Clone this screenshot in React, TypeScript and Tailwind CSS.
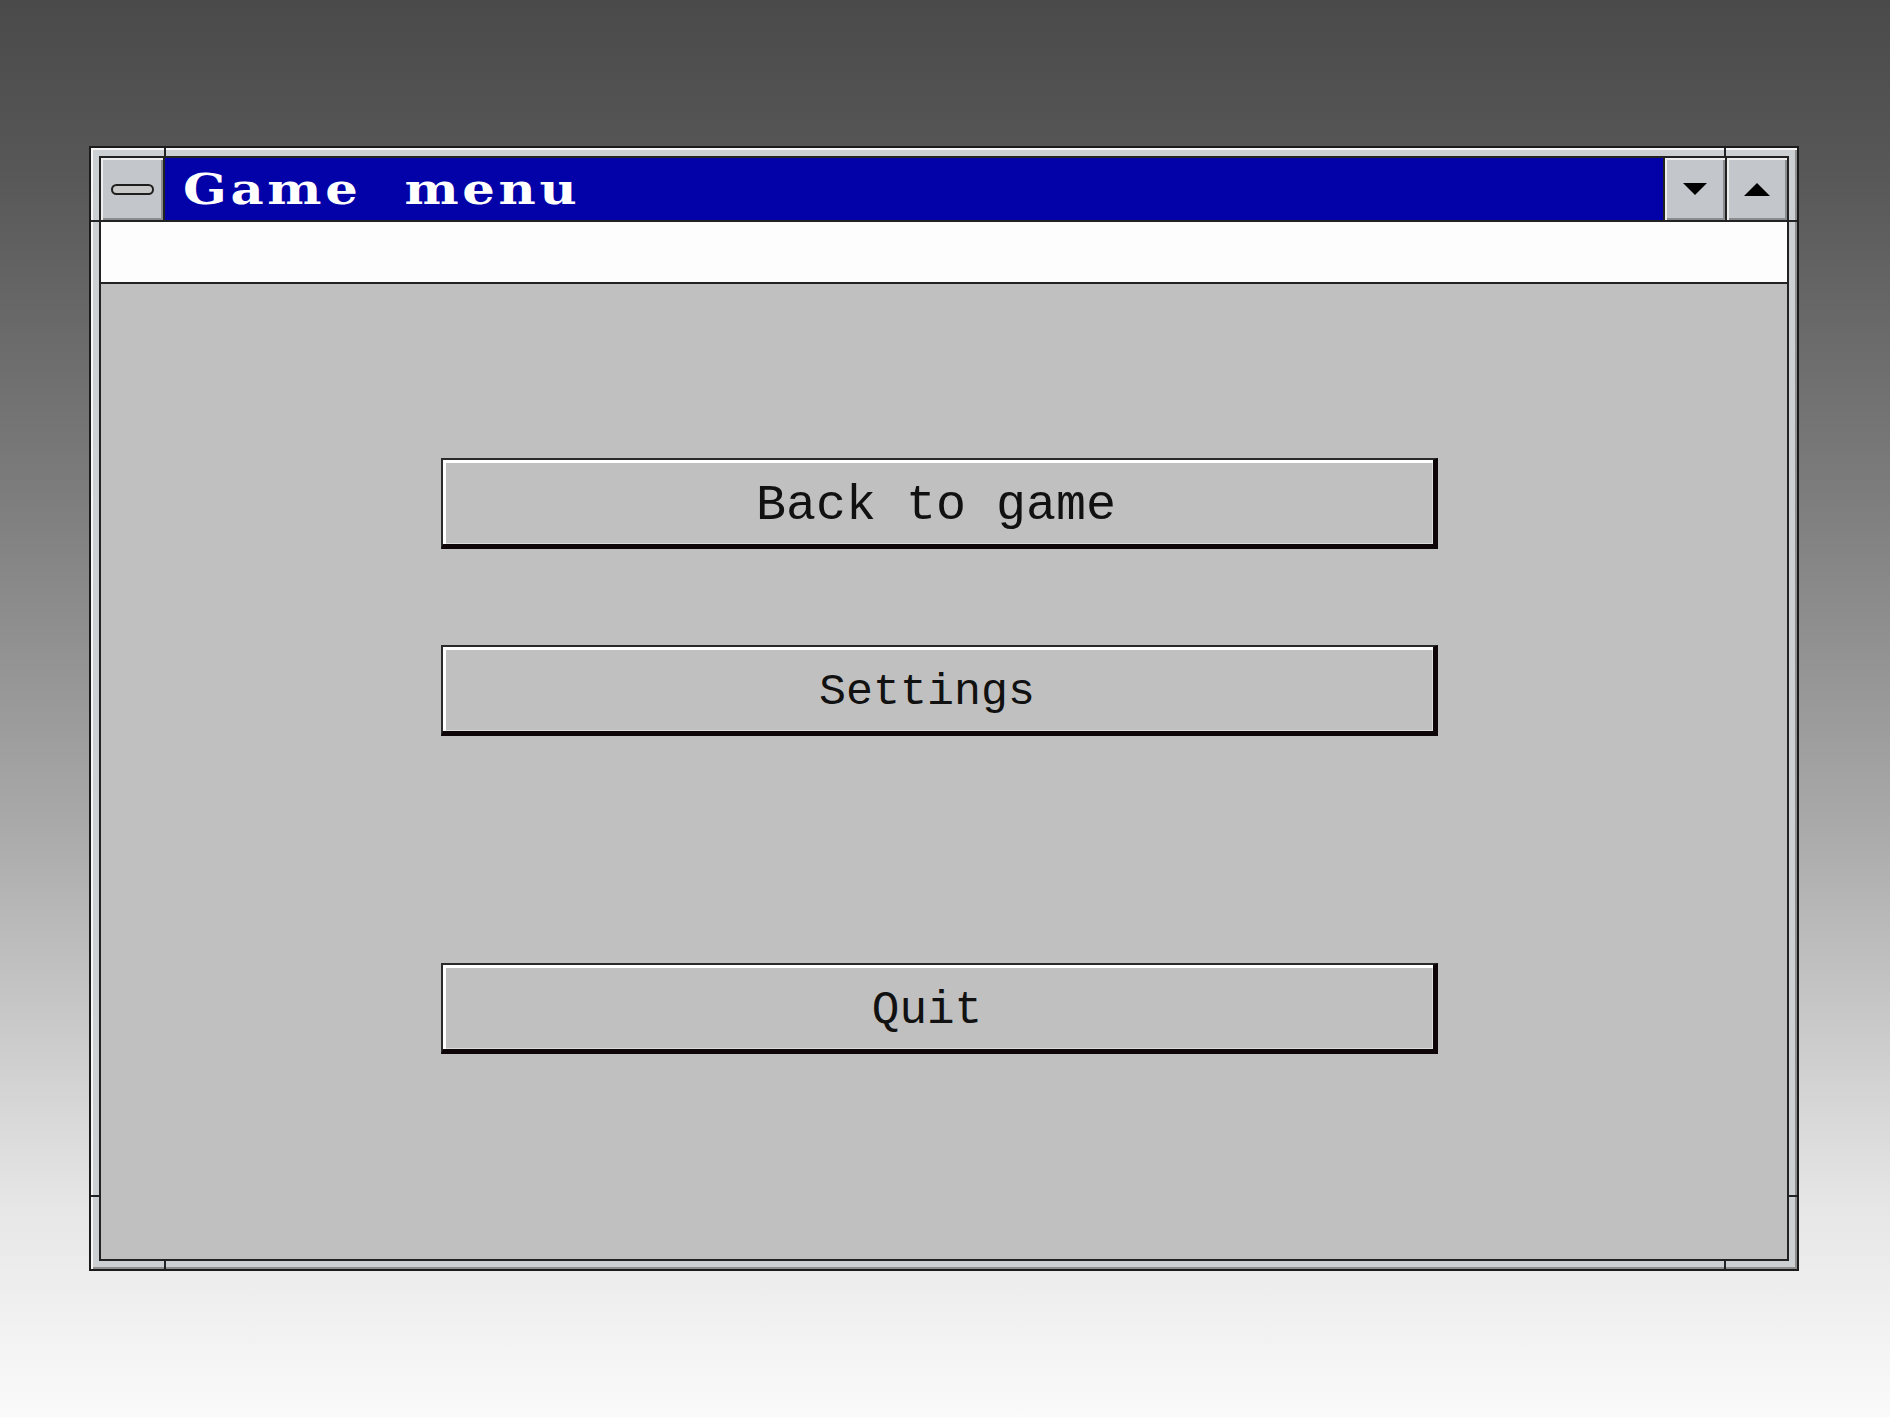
import { ReactNode } from "react";

const buttons: { label: string; size: string; gap: string; shift: string }[] = [
  { label: "Back to game", size: "text-[50px]", gap: "mt-[174px]", shift: "pr-[4px]" },
  { label: "Settings", size: "text-[45px]", gap: "mt-[96px]", shift: "pr-[22px]" },
  { label: "Quit", size: "text-[46px]", gap: "mt-[227px]", shift: "pr-[22px]" },
];

export default function App() {
  return (
    <main className="h-[1417px] w-full overflow-hidden bg-[linear-gradient(to_bottom,#4a4a4a_0%,#575757_12%,#7d7d7d_35%,#a9a9a9_58%,#e6e6e6_85%,#fafafa_100%)] pl-[89px] pt-[146px]">
      <div className="relative h-[1125px] w-[1710px] border-2 border-[#1b1b1b] bg-[#cdd0d3] p-[8px] shadow-[inset_2px_2px_0_#f6f6f6,inset_-2px_-2px_0_#8e8e8e]">
        <Notches />
        <div className="flex h-full flex-col border-2 border-[#222]">
          <TitleBar />
          <div className="h-[62px] border-b-2 border-[#222] bg-[#fdfdfd]" />
          <div className="flex flex-1 flex-col bg-[#c0c0c0] pl-[340px]">
            {buttons.map(({ label, size, gap, shift }) => (
              <MenuButton key={label} className={`${gap} ${shift}`} size={size}>
                {label}
              </MenuButton>
            ))}
          </div>
        </div>
      </div>
    </main>
  );
}

function Notches() {
  return (
    <>
      <div className="absolute left-[73px] top-0 h-[8px] w-[2px] bg-[#222]" />
      <div className="absolute left-[1633px] top-0 h-[8px] w-[2px] bg-[#222]" />
      <div className="absolute bottom-0 left-[73px] h-[8px] w-[2px] bg-[#222]" />
      <div className="absolute bottom-0 left-[1633px] h-[8px] w-[2px] bg-[#222]" />
      <div className="absolute left-0 top-[72px] h-[2px] w-[8px] bg-[#222]" />
      <div className="absolute right-0 top-[72px] h-[2px] w-[8px] bg-[#222]" />
      <div className="absolute left-0 top-[1047px] h-[2px] w-[8px] bg-[#222]" />
      <div className="absolute right-0 top-[1047px] h-[2px] w-[8px] bg-[#222]" />
    </>
  );
}

function TitleBar() {
  return (
    <div className="flex h-[64px] border-b-2 border-[#222]">
      <div className="flex w-[62px] items-center justify-center bg-[#c3c6ca] shadow-[inset_2px_2px_0_#eeeeee,inset_-2px_-2px_0_#8a8d90]">
        <div className="h-[11px] w-[43px] rounded-full border-[2.5px] border-[#1e1e1e] bg-[#c8c8c8]" />
      </div>
      <div className="flex flex-1 items-center border-x-2 border-[#222] bg-[#0202a8] pl-[18px] pt-[2px]">
        <span className="inline-block origin-left scale-x-[1.22] whitespace-pre font-['DejaVu_Serif',serif] text-[42px] font-bold leading-none tracking-[3px] text-white">
          {"Game  menu"}
        </span>
      </div>
      <TitleButton>
        <svg width="24" height="12" viewBox="0 0 24 12">
          <path d="M0 0H24L12 12Z" fill="#000" />
        </svg>
      </TitleButton>
      <div className="w-[2px] bg-[#222]" />
      <TitleButton>
        <svg width="26" height="13" viewBox="0 0 26 13">
          <path d="M0 13H26L13 0Z" fill="#000" />
        </svg>
      </TitleButton>
    </div>
  );
}

function TitleButton({ children }: { children: ReactNode }) {
  return (
    <div className="flex w-[60px] items-center justify-center bg-[#c3c6ca] shadow-[inset_2px_2px_0_#eeeeee,inset_-2px_-2px_0_#8a8d90]">
      {children}
    </div>
  );
}

function MenuButton({
  children,
  className,
  size,
}: {
  children: ReactNode;
  className: string;
  size: string;
}) {
  return (
    <button
      className={`${className} flex h-[91px] w-[997px] items-center justify-center border-b-[5px] border-l-2 border-r-[5px] border-t-2 border-b-[#0d0507] border-l-[#2a2a2a] border-r-[#0d0507] border-t-[#2a2a2a] bg-[#c0c0c0] pt-[7px] shadow-[inset_3px_3px_0_#ffffff,inset_-1px_-1px_0_#dcdcdc]`}
    >
      <span
        className={`${size} font-['Courier_New','Nimbus_Mono_PS','FreeMono','Liberation_Mono',monospace] leading-none text-[#111]`}
      >
        {children}
      </span>
    </button>
  );
}
